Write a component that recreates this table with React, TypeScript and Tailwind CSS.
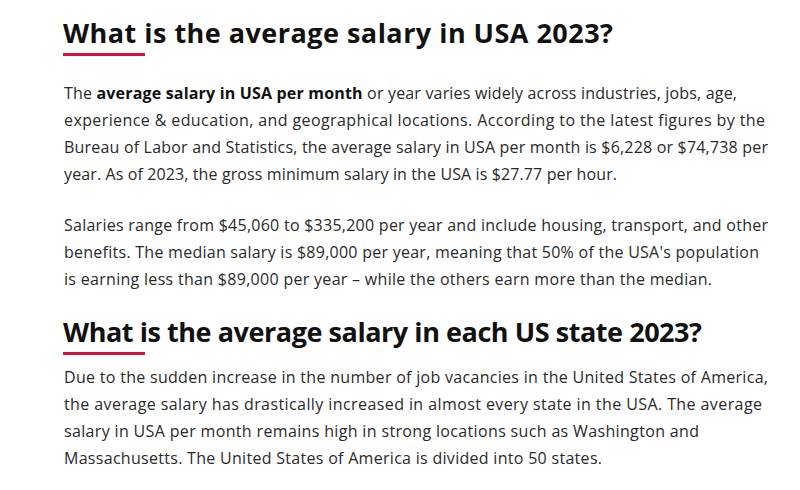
import React, { useLayoutEffect, useRef, useState } from 'react';

// each line is stretched to the width it has in the reference (Poppins is not installed)
function FitLine({ width, className, children }: { width: number; className?: string; children: React.ReactNode }) {
  const ref = useRef<HTMLSpanElement>(null);
  const [spacing, setSpacing] = useState(0);

  useLayoutEffect(() => {
    const el = ref.current;
    if (!el) return;
    el.style.letterSpacing = '0px';
    const natural = el.getBoundingClientRect().width;
    const chars = (el.textContent || '').length;
    if (chars > 1) setSpacing((width - natural) / (chars - 1));
  }, [width]);

  return (
    <span className={`block ${className ?? ''}`}>
      <span ref={ref} className="inline-block whitespace-nowrap" style={{ letterSpacing: `${spacing}px` }}>
        {children}
      </span>
    </span>
  );
}

type Line = { text: React.ReactNode; w: number };

const para1: Line[] = [
  {
    text: (
      <>
        The <strong className="font-bold text-[#111]">average salary in USA per month</strong> or year varies widely across industries, jobs, age,
      </>
    ),
    w: 673,
  },
  { text: 'experience & education, and geographical locations. According to the latest figures by the', w: 701 },
  { text: 'Bureau of Labor and Statistics, the average salary in USA per month is $6,228 or $74,738 per', w: 704 },
  { text: 'year. As of 2023, the gross minimum salary in the USA is $27.77 per hour.', w: 553 },
];

const para2: Line[] = [
  { text: 'Salaries range from $45,060 to $335,200 per year and include housing, transport, and other', w: 704 },
  { text: "benefits. The median salary is $89,000 per year, meaning that 50% of the USA's population", w: 695 },
  { text: 'is earning less than $89,000 per year – while the others earn more than the median.', w: 648 },
];

const para3: Line[] = [
  { text: 'Due to the sudden increase in the number of job vacancies in the United States of America,', w: 704 },
  { text: 'the average salary has drastically increased in almost every state in the USA. The average', w: 698 },
  { text: 'salary in USA per month remains high in strong locations such as Washington and', w: 635 },
  { text: 'Massachusetts. The United States of America is divided into 50 states.', w: 538 },
];

function Heading({ children, w }: { children: React.ReactNode; w: number }) {
  return (
    <div>
      <h2 className="text-[27px] leading-[36px] font-bold text-[#111]">
        <FitLine width={w}>{children}</FitLine>
      </h2>
      <div className="mt-[2px] h-[3px] w-[82px] bg-[#d2123f]" />
    </div>
  );
}

function Para({ lines }: { lines: Line[] }) {
  return (
    <p className="pl-[1px] text-[16px] leading-[27px] text-[#2a2a2a]">
      {lines.map((l, i) => (
        <FitLine key={i} width={l.w}>
          {l.text}
        </FitLine>
      ))}
    </p>
  );
}

export default function App() {
  return (
    <div className="w-[800px] h-[490px] bg-white overflow-hidden pl-[63px] pt-[15px] font-['Open_Sans',sans-serif]">
      <Heading w={550}>What is the average salary in USA 2023?</Heading>
      <div className="mt-[24px]">
        <Para lines={para1} />
      </div>
      <div className="mt-[24px]">
        <Para lines={para2} />
      </div>
      <div className="mt-[21px]">
        <Heading w={639}>What is the average salary in each US state 2023?</Heading>
      </div>
      <div className="mt-[9px]">
        <Para lines={para3} />
      </div>
    </div>
  );
}
